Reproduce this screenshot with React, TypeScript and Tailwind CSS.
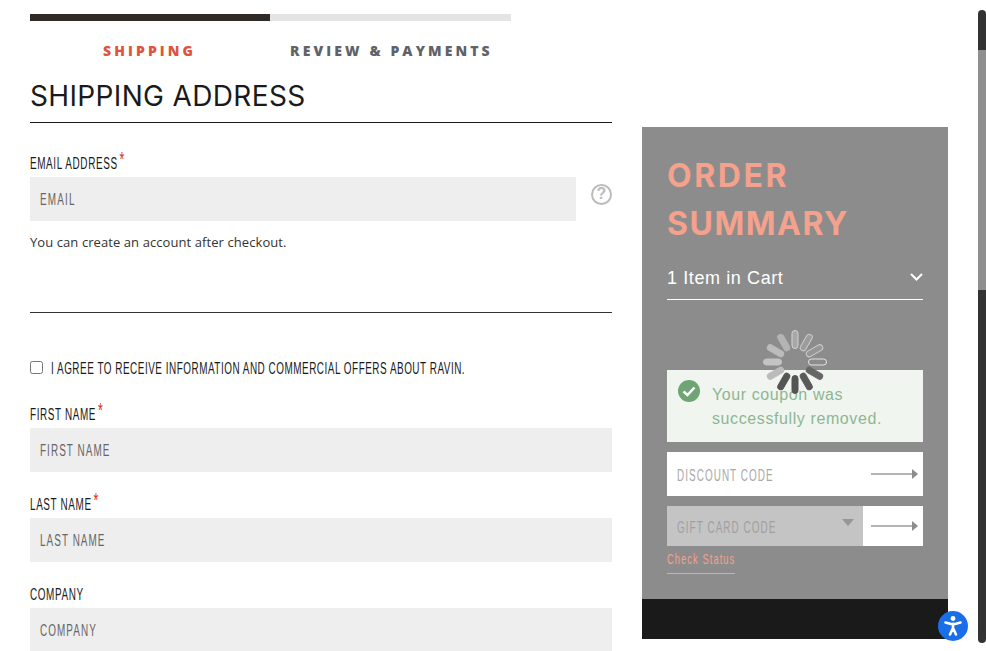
import { ReactNode } from 'react';

const sans = { fontFamily: '"Liberation Sans", sans-serif' };

// the site uses a condensed face that is not installed, so narrow the text instead
function Narrow({ children }: { children: ReactNode }) {
  return <span className="relative top-[1px] inline-block origin-left scale-x-[0.62] whitespace-nowrap">{children}</span>;
}

function Label({ text, required }: { text: string; required?: boolean }) {
  return (
    <label className="flex h-[20px] items-center text-[16px] leading-5 tracking-[1px] text-[#1a1a1a]">
      <Narrow>
        {text}
        {required && <span className="relative top-[-3px] ml-[3px] text-[20px] leading-[0] text-[#e02b27]">*</span>}
      </Narrow>
    </label>
  );
}

function Field({ label, placeholder, required, gap }: { label: string; placeholder: string; required?: boolean; gap?: string }) {
  return (
    <div className={gap}>
      <Label text={label} required={required} />
      <div className="mt-[4px] flex h-[44px] items-center bg-[#eeeeee] px-[10px] text-[16px] tracking-[1.7px] text-[#666666]">
        <Narrow>{placeholder}</Narrow>
      </div>
    </div>
  );
}

function Arrow({ width }: { width: number }) {
  return (
    <svg width={width} height="12" viewBox={`0 0 ${width} 12`}>
      <line x1="0" y1="6" x2={width - 6} y2="6" stroke="#9a9a9a" strokeWidth="1.5" />
      <path d={`M${width - 6} 1 L${width} 6 L${width - 6} 11 Z`} fill="#8c8c8c" />
    </svg>
  );
}

function Spinner() {
  const bars = [
    { a: 0, c: '#a8a8a8', s: '#d4d4d4' },
    { a: 30, c: '#9c9c9c', s: '#cccccc' },
    { a: 60, c: '#969696', s: '#d0d0d0' },
    { a: 90, c: '#8c8c8c', s: '#e4e4e4' },
    { a: 120, c: '#666666', s: '#666666' },
    { a: 150, c: '#5a5a5a', s: '#5a5a5a' },
    { a: 180, c: '#555555', s: '#555555' },
    { a: 210, c: '#555555', s: '#555555' },
    { a: 240, c: '#bbbbbb', s: '#bbbbbb' },
    { a: 270, c: '#c4c4c4', s: '#c4c4c4' },
    { a: 300, c: '#bcbcbc', s: '#bcbcbc' },
    { a: 330, c: '#b4b4b4', s: '#b4b4b4' },
  ];
  return (
    <svg width="66" height="66" viewBox="0 0 66 66" className="absolute left-[120px] top-[202px]">
      {bars.map((b) => (
        <rect key={b.a} x="30" y="1.5" width="6" height="18" rx="3" fill={b.c} stroke={b.s} strokeWidth="1" transform={`rotate(${b.a} 33 33)`} />
      ))}
    </svg>
  );
}

function OrderSummary() {
  return (
    <aside className="relative ml-[30px] mt-[127px] h-[512px] w-[306px] bg-[#8c8c8c]">
      <div className="h-[472px] px-[25px] pt-[25px]">
        <h2 className="text-[32px] font-bold leading-[48px] text-[#f4a18d]" style={{ fontFamily: 'Inter, sans-serif' }}>
          <span className="tracking-[2.6px]">ORDER</span>
          <br />
          <span className="tracking-[1.5px]">SUMMARY</span>
        </h2>
        <div className="mt-[4px] flex h-[48px] items-center justify-between border-b border-white pt-[6px] text-[18px] tracking-[0.6px] text-white" style={sans}>
          <span>1 Item in Cart</span>
          <svg width="13" height="8" viewBox="0 0 13 8" fill="none" stroke="white" strokeWidth="2" className="mb-[3px]"><path d="M1 1 L6.5 6.5 L12 1" /></svg>
        </div>
        <div className="mt-[70px] flex h-[72px] items-start bg-[#f0f6ef] pl-[11px] pt-[10px]">
          <svg width="22" height="22" viewBox="0 0 22 22" className="shrink-0">
            <circle cx="11" cy="11" r="11" fill="#6fa575" />
            <path d="M5.5 11.5 L9.5 15 L16.5 7.5" fill="none" stroke="white" strokeWidth="2.5" />
          </svg>
          <p className="ml-[12px] mt-[3px] text-[16px] leading-[24px] tracking-[0.6px] text-[#8fb594]" style={sans}>
            Your coupon was<br />successfully removed.
          </p>
        </div>
        <div className="mt-[10px] flex h-[44px] items-center justify-between bg-white pl-[10px] pr-[5px] text-[16px] tracking-[1.7px] text-[#a8a8a8]">
          <span className="pt-[2px]"><Narrow>DISCOUNT CODE</Narrow></span>
          <Arrow width={47} />
        </div>
        <div className="mt-[10px] flex h-[40px]">
          <div className="relative flex w-[196px] items-center bg-[#c4c4c4] pl-[10px] pt-[2px] text-[16px] tracking-[1.7px] text-[#a0a0a0]">
            <Narrow>GIFT CARD CODE</Narrow>
            <span className="absolute right-[9px] top-[13px] h-0 w-0 border-x-[6px] border-t-[7px] border-x-transparent border-t-[#969696]" />
          </div>
          <div className="flex w-[60px] items-center justify-center bg-white pl-[2px]"><Arrow width={47} /></div>
        </div>
        <a className="mt-[3px] block w-[68px] border-b border-[#f4a18d] pb-[6px] text-[15px] leading-[18px] tracking-[1.75px] text-[#f4a18d]">
          <Narrow>Check Status</Narrow>
        </a>
      </div>
      <div className="h-[40px] bg-[#1a1a1a]" />
      <Spinner />
    </aside>
  );
}

export default function App() {
  return (
    <div className="relative flex h-[651px] w-[986px] overflow-hidden bg-white" style={sans}>
      <main className="ml-[30px] w-[582px] shrink-0">
        <div className="mt-[14px] flex h-[7px] w-[481px]">
          <div className="w-[240px] bg-[#2f2a25]" />
          <div className="flex-1 bg-[#e4e4e4]" />
        </div>
        <div className="mt-[21px] flex h-[18px] text-[14px] font-extrabold leading-[18px] tracking-[3.1px]" style={{ fontFamily: '"Open Sans", sans-serif' }}>
          <span className="ml-[73px] text-[#e0533d]">SHIPPING</span>
          <span className="ml-[94px] text-[#5f6368]">REVIEW &amp; PAYMENTS</span>
        </div>
        <h1 className="mt-[15px] border-b border-[#1a1a1a] pb-[5px] text-[28px] font-normal leading-[42px] tracking-[0.35px] text-[#1a1a1a]" style={{ fontFamily: 'Inter, sans-serif' }}>SHIPPING ADDRESS</h1>
        <div className="mt-[30px]">
          <Label text="EMAIL ADDRESS" required />
          <div className="mt-[4px] flex items-center">
            <div className="flex h-[44px] w-[546px] items-center bg-[#eeeeee] px-[10px] text-[16px] tracking-[1.9px] text-[#666666]">
              <Narrow>EMAIL</Narrow>
            </div>
            <span className="relative top-[-5px] ml-[15px] flex h-[21px] w-[21px] items-center justify-center rounded-full border-2 border-[#bbbbbb] text-[16px] font-bold text-[#bbbbbb]">?</span>
          </div>
        </div>
        <p className="mt-[12px] text-[13px] leading-[18px] tracking-[0.08px] text-[#333333]" style={{ fontFamily: '"Open Sans", sans-serif' }}>You can create an account after checkout.</p>
        <div className="mt-[61px] h-px bg-[#333333]" />
        <label className="mt-[45px] flex h-[20px] items-center text-[16px] tracking-[0.83px] text-[#1a1a1a]">
          <input type="checkbox" className="relative top-[-1px] h-[13px] w-[13px]" />
          <span className="ml-[8px]"><Narrow>I AGREE TO RECEIVE INFORMATION AND COMMERCIAL OFFERS ABOUT RAVIN.</Narrow></span>
        </label>
        <Field gap="mt-[26px]" label="FIRST NAME" placeholder="FIRST NAME" required />
        <Field gap="mt-[22px]" label="LAST NAME" placeholder="LAST NAME" required />
        <Field gap="mt-[22px]" label="COMPANY" placeholder="COMPANY" />
      </main>
      <OrderSummary />

      {/* custom scrollbar */}
      <div className="absolute left-[978px] top-[10px] h-[633px] w-[8px] overflow-hidden rounded-[4px] bg-[#333333]">
        <div className="mt-[40px] h-[240px] bg-[#8f8f8f]" />
      </div>

      {/* accessibility widget */}
      <button className="absolute left-[938px] top-[611px] flex h-[30px] w-[30px] items-center justify-center rounded-full bg-[#1a6fe8]">
        <svg width="24" height="24" viewBox="0 0 24 24" fill="none" stroke="white" strokeWidth="2.6" strokeLinecap="round" strokeLinejoin="round">
          <circle cx="12" cy="4.5" r="2.4" fill="white" stroke="none" />
          <path d="M4.5 8.5 L10 10 L14 10 L19.5 8.5" />
          <path d="M12 10 L12 14 M12 14 L9 20.5 M12 14 L15 20.5" />
        </svg>
      </button>
    </div>
  );
}
